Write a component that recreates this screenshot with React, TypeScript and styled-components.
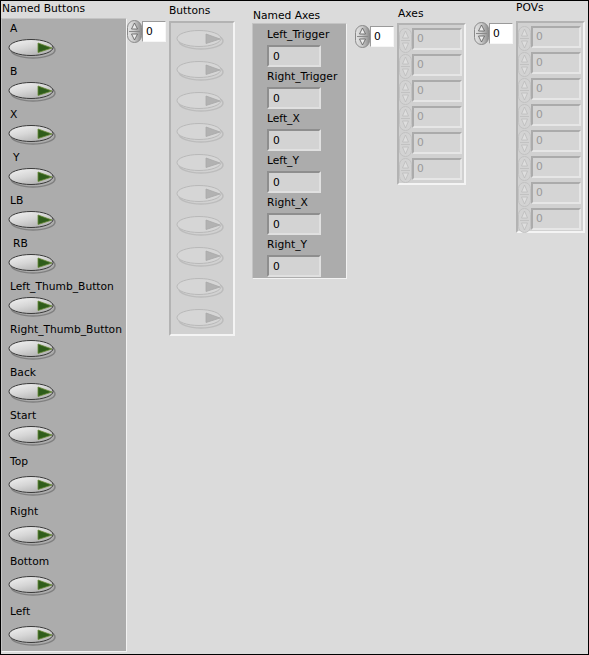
import React from 'react';
import styled, { createGlobalStyle } from 'styled-components';

const GlobalStyle = createGlobalStyle`
  html, body { margin: 0; padding: 0; background: #dbdbdb; }
  body { font-family: "DejaVu Sans", Verdana, sans-serif; }
`;

const Panel = styled.div`
  width: 589px;
  height: 655px;
  box-sizing: border-box;
  border: 1px solid #000;
  background: #dbdbdb;
  display: flex;
  align-items: flex-start;
  overflow: hidden;
  font-family: "DejaVu Sans", Verdana, sans-serif;
  font-size: 10.7px;
  color: #000;
`;

const Column = styled.div<{ $top: number; $left?: number }>`
  display: flex;
  flex-direction: column;
  align-items: flex-start;
  padding-top: ${(p) => p.$top}px;
  margin-left: ${(p) => p.$left ?? 0}px;
`;

const Caption = styled.div<{ $gap?: number; $indent?: number }>`
  height: 14px;
  line-height: 14px;
  white-space: nowrap;
  margin-bottom: ${(p) => p.$gap ?? 0}px;
  padding-left: ${(p) => p.$indent ?? 0}px;
`;

/* ---------- Named Buttons cluster ---------- */
const ButtonCluster = styled.div`
  width: 126px;
  height: 634px;
  box-sizing: border-box;
  background: #acacac;
  border: 1px solid;
  border-color: #c4c4c4 #f2f2f2 #f2f2f2 #c4c4c4;
  padding: 3px 0 0 6px;
  display: flex;
  flex-direction: column;
`;

const ButtonItem = styled.div<{ $gap: number; $after: number }>`
  display: flex;
  flex-direction: column;
  align-items: flex-start;
  margin-bottom: ${(p) => p.$after}px;
  & > svg { margin-top: ${(p) => p.$gap}px; display: block; }
`;

/* ---------- array groups ---------- */
const ArrayGroup = styled.div<{ $top: number; $left: number }>`
  display: grid;
  grid-template-columns: auto auto;
  column-gap: 3px;
  align-items: start;
  padding-top: ${(p) => p.$top}px;
  margin-left: ${(p) => p.$left}px;
`;

const GroupCaption = styled(Caption)`
  grid-column: 2;
  grid-row: 1;
`;

const IndexControl = styled.div<{ $offset: number }>`
  grid-column: 1;
  grid-row: 2;
  display: flex;
  align-items: flex-start;
  margin-top: ${(p) => p.$offset}px;
  & > svg { display: block; }
`;

const IndexBox = styled.div`
  width: 24px;
  height: 21px;
  margin-top: 1px;
  box-sizing: border-box;
  background: #fff;
  border: 1px solid;
  border-color: #9a9a9a #f6f6f6 #f6f6f6 #9a9a9a;
  padding-left: 3px;
  line-height: 19px;
`;

const ArrayFrame = styled.div<{ $pad: string; $gap: number; $width?: number }>`
  grid-column: 2;
  grid-row: 2;
  box-sizing: border-box;
  ${(p) => (p.$width ? `width: ${p.$width}px;` : '')}
  background: #d1d1d1;
  border: 2px solid;
  border-color: #b3b3b3 #f4f4f4 #f4f4f4 #b3b3b3;
  padding: ${(p) => p.$pad};
  display: flex;
  flex-direction: column;
  gap: ${(p) => p.$gap}px;
  & > svg { display: block; }
`;

const GhostRow = styled.div`
  display: flex;
  align-items: flex-start;
  height: 22px;
  & > svg { display: block; flex: none; }
`;

const GhostBox = styled.div`
  width: 50px;
  height: 22px;
  box-sizing: border-box;
  background: #d5d5d5;
  border: 2px solid;
  border-color: #ababab #e6e6e6 #e6e6e6 #ababab;
  padding-left: 3px;
  line-height: 18px;
  color: #9a9a9a;
`;

/* ---------- Named Axes cluster ---------- */
const AxesCluster = styled.div`
  width: 95px;
  box-sizing: border-box;
  background: #acacac;
  border: 1px solid;
  border-color: #c4c4c4 #f2f2f2 #f2f2f2 #c4c4c4;
  padding: 4px 0 1px 14px;
  display: flex;
  flex-direction: column;
`;

const AxisItem = styled.div<{ $last?: boolean }>`
  display: flex;
  flex-direction: column;
  align-items: flex-start;
  margin-bottom: ${(p) => (p.$last ? 0 : 3)}px;
`;

const IndicatorBox = styled.div`
  width: 54px;
  height: 22px;
  margin-top: 3px;
  box-sizing: border-box;
  background: #d3d3d3;
  border: 2px solid;
  border-color: #8e8e8e #e0e0e0 #e0e0e0 #8e8e8e;
  padding-left: 4px;
  line-height: 19px;
`;

/* ---------- drawings ---------- */
const OkButton: React.FC<{ ghost?: boolean }> = ({ ghost }) =>
  ghost ? (
    <svg width="52" height="22" viewBox="0 0 52 22">
      <ellipse cx="25" cy="12" rx="22" ry="8" fill="none" stroke="#bcbcbc" strokeWidth="1.5" />
      <ellipse cx="23" cy="9.5" rx="22" ry="8" fill="#d6d6d6" stroke="#b9b9b9" strokeWidth="1" />
      <path d="M30 5 L44 10 L30 14.5 Z" fill="#b2b2b2" stroke="#a8a8a8" strokeWidth="0.8" />
    </svg>
  ) : (
    <svg width="52" height="22" viewBox="0 0 52 22">
      <defs>
        <linearGradient id="okg" x1="0" y1="0" x2="0.6" y2="1">
          <stop offset="0" stopColor="#f4f4f4" />
          <stop offset="0.55" stopColor="#d6d6d6" />
          <stop offset="1" stopColor="#b4b4b4" />
        </linearGradient>
      </defs>
      <ellipse cx="25" cy="12" rx="22" ry="8" fill="none" stroke="#6e6e6e" strokeWidth="1.5" opacity="0.7" />
      <ellipse cx="23" cy="9.5" rx="22" ry="8" fill="url(#okg)" stroke="#3a3a3a" strokeWidth="1" />
      <path d="M30 5 L44 10 L30 14.5 Z" fill="#2f5d1b" stroke="#6b8a3a" strokeWidth="0.8" />
    </svg>
  );

const Spinner: React.FC = () => (
  <svg width="15" height="23" viewBox="0 0 15 23">
    <defs>
      <linearGradient id="spg" x1="0" y1="0" x2="1" y2="0">
        <stop offset="0" stopColor="#e4e4e4" />
        <stop offset="0.45" stopColor="#cdcdcd" />
        <stop offset="1" stopColor="#8c8c8c" />
      </linearGradient>
    </defs>
    <rect x="0.5" y="0.5" width="14" height="22" rx="7" fill="url(#spg)" stroke="#8a8a8a" />
    <line x1="2" x2="13" y1="11.5" y2="11.5" stroke="#8a8a8a" />
    <path d="M7.5 3 L10.5 9 H4.5 Z" fill="#ececec" stroke="#5a5a5a" strokeWidth="0.8" />
    <path d="M7.5 20 L10.5 14 H4.5 Z" fill="#ececec" stroke="#5a5a5a" strokeWidth="0.8" />
  </svg>
);

const GhostSpinner: React.FC = () => (
  <svg width="13" height="25" viewBox="0 0 13 25" style={{ overflow: 'visible' }}>
    <rect x="0.5" y="0.5" width="12" height="24" rx="6" fill="#d3d3d3" stroke="#c2c2c2" />
    <line x1="2" x2="11" y1="12.5" y2="12.5" stroke="#c2c2c2" />
    <path d="M6.5 3 L9.5 10 H3.5 Z" fill="#dedede" stroke="#bdbdbd" strokeWidth="0.8" />
    <path d="M6.5 22 L9.5 15 H3.5 Z" fill="#dedede" stroke="#bdbdbd" strokeWidth="0.8" />
  </svg>
);

/* ---------- data ---------- */
type NamedButton = { name: string; indent: number; gap: number; after: number };
const namedButtons: NamedButton[] = [
  { name: 'A', indent: 2, gap: 2, after: 5 },
  { name: 'B', indent: 2, gap: 2, after: 5 },
  { name: 'X', indent: 2, gap: 2, after: 5 },
  { name: 'Y', indent: 5, gap: 2, after: 5 },
  { name: 'LB', indent: 2, gap: 2, after: 5 },
  { name: 'RB', indent: 5, gap: 2, after: 5 },
  { name: 'Left_Thumb_Button', indent: 2, gap: 2, after: 5 },
  { name: 'Right_Thumb_Button', indent: 2, gap: 2, after: 5 },
  { name: 'Back', indent: 2, gap: 2, after: 5 },
  { name: 'Start', indent: 2, gap: 2, after: 8 },
  { name: 'Top', indent: 2, gap: 6, after: 8 },
  { name: 'Right', indent: 2, gap: 6, after: 8 },
  { name: 'Bottom', indent: 2, gap: 6, after: 8 },
  { name: 'Left', indent: 2, gap: 6, after: 0 },
];

const namedAxes = ['Left_Trigger', 'Right_Trigger', 'Left_X', 'Left_Y', 'Right_X', 'Right_Y'];

const range = (n: number) => Array.from({ length: n }, (_, i) => i);

export default function App() {
  return (
    <>
      <GlobalStyle />
      <Panel>
        <Column $top={1}>
          <Caption $gap={2} $indent={1}>Named Buttons</Caption>
          <ButtonCluster>
            {namedButtons.map((b) => (
              <ButtonItem key={b.name} $gap={b.gap} $after={b.after}>
                <Caption $indent={b.indent}>{b.name}</Caption>
                <OkButton />
              </ButtonItem>
            ))}
          </ButtonCluster>
        </Column>

        <ArrayGroup $top={3} $left={0}>
          <GroupCaption $gap={3}>Buttons</GroupCaption>
          <IndexControl $offset={-1}>
            <Spinner />
            <IndexBox>0</IndexBox>
          </IndexControl>
          <ArrayFrame $pad="6px 4px 4px 5px" $gap={9} $width={66}>
            {range(10).map((i) => (
              <OkButton key={i} ghost />
            ))}
          </ArrayFrame>
        </ArrayGroup>

        <Column $top={8} $left={17}>
          <Caption $indent={1}>Named Axes</Caption>
          <AxesCluster>
            {namedAxes.map((a, i) => (
              <AxisItem key={a} $last={i === namedAxes.length - 1}>
                <Caption>{a}</Caption>
                <IndicatorBox>0</IndicatorBox>
              </AxisItem>
            ))}
          </AxesCluster>
        </Column>

        <ArrayGroup $top={6} $left={8}>
          <GroupCaption $gap={2} $indent={1}>Axes</GroupCaption>
          <IndexControl $offset={2}>
            <Spinner />
            <IndexBox>0</IndexBox>
          </IndexControl>
          <ArrayFrame $pad="3px 2px 3px 0" $gap={4}>
            {range(6).map((i) => (
              <GhostRow key={i}>
                <GhostSpinner />
                <GhostBox>0</GhostBox>
              </GhostRow>
            ))}
          </ArrayFrame>
        </ArrayGroup>

        <ArrayGroup $top={0} $left={8}>
          <GroupCaption $gap={6}>POVs</GroupCaption>
          <IndexControl $offset={1}>
            <Spinner />
            <IndexBox>0</IndexBox>
          </IndexControl>
          <ArrayFrame $pad="3px 2px 1px 0" $gap={4}>
            {range(8).map((i) => (
              <GhostRow key={i}>
                <GhostSpinner />
                <GhostBox>0</GhostBox>
              </GhostRow>
            ))}
          </ArrayFrame>
        </ArrayGroup>
      </Panel>
    </>
  );
}
